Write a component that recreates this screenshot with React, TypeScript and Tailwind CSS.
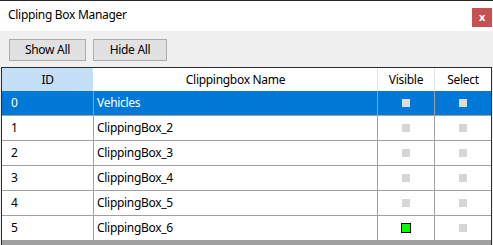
const rows = [
  { id: "0", name: "Vehicles", visible: false, selected: true },
  { id: "1", name: "ClippingBox_2", visible: false, selected: false },
  { id: "2", name: "ClippingBox_3", visible: false, selected: false },
  { id: "3", name: "ClippingBox_4", visible: false, selected: false },
  { id: "4", name: "ClippingBox_5", visible: false, selected: false },
  { id: "5", name: "ClippingBox_6", visible: true, selected: false },
];

const Box = ({ on, selected }: { on: boolean; selected: boolean }) =>
  on ? (
    <div className="w-[10px] h-[10px] border border-black bg-[#00ff00]"></div>
  ) : (
    <div className={`w-[8px] h-[8px] ${selected ? "bg-[#dcdcdc]" : "bg-[#d6d6d6]"}`}></div>
  );

export default function App() {
  return (
    <div className="w-[493px] h-[245px] overflow-hidden bg-[#f0f0f0] text-[12px] tracking-[-0.3px] text-black font-['Noto_Sans',sans-serif] flex flex-col">
      <div className="h-px bg-[#2b2b2b]"></div>

      {/* Title bar */}
      <div className="h-[30px] bg-white flex items-start justify-between pl-[8px] pr-[1px]">
        <span className="mt-[6px] leading-[16px]">Clipping Box Manager</span>
        <div className="mt-[7px] w-[20px] h-[19px] bg-[#c75050] text-white font-bold text-[11px] leading-[17px] flex justify-center">
          x
        </div>
      </div>

      {/* Toolbar */}
      <div className="h-[36px] flex items-start gap-[7px] pl-[9px] pt-[8px]">
        <button className="w-[77px] h-[22px] border border-[#adadad] bg-[#e1e1e1] leading-[18px]">Show All</button>
        <button className="w-[74px] h-[22px] border border-[#adadad] bg-[#e1e1e1] leading-[18px]">Hide All</button>
      </div>

      {/* Grid */}
      <div className="ml-px w-[491px] flex-1 border-t border-l border-r border-[#2b2b2b] bg-[#a0a0a0] flex flex-col">
        <div className="flex h-[23px] bg-white">
          <div className="w-[92px] border-r border-white bg-[#c4dff6] flex items-center justify-center">ID</div>
          <div className="w-[284px] border-r border-[#e3e3e3] flex items-center justify-center">Clippingbox Name</div>
          <div className="w-[57px] border-r border-[#e3e3e3] flex items-center justify-center">Visible</div>
          <div className="flex-1 flex items-center justify-center">Select</div>
        </div>
        {rows.map((r) => (
          <div
            key={r.id}
            className={`flex h-[25px] border-b border-[#a0a0a0] ${r.selected ? "bg-[#0078d7] text-white" : "bg-white"}`}
          >
            <div className="w-[92px] border-r border-[#a0a0a0] flex items-center pl-[9px]">{r.id}</div>
            <div className="w-[284px] border-r border-[#a0a0a0] flex items-center pl-[3px]">{r.name}</div>
            <div className="w-[57px] border-r border-[#a0a0a0] flex items-center justify-center">
              <Box on={r.visible} selected={r.selected} />
            </div>
            <div className="flex-1 flex items-center justify-center">
              <Box on={false} selected={r.selected} />
            </div>
          </div>
        ))}
      </div>
    </div>
  );
}
